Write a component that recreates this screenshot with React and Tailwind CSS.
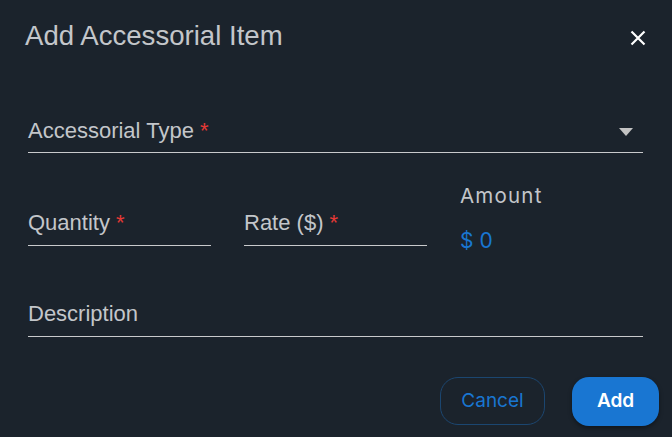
export default function App() {
  const label = "text-[22px] leading-[26px] text-[#c3c6ca]"
  const field = "pb-[8px] border-b border-[#c9cacc]"

  return (
    <div className="w-[672px] h-[437px] bg-[#1b232c] overflow-hidden" style={{ fontFamily: '"Liberation Sans", Arial, sans-serif' }}>
      {/* header */}
      <div className="flex items-start justify-between pt-[20px] pl-[25px] pr-[25px]">
        <h2 className="text-[27.6px] leading-[32px] text-[#c3c6ca]">Add Accessorial Item</h2>
        <button className="mt-[10px] mr-[1px] text-white">
          <svg width="16" height="16" viewBox="0 0 16 16" fill="none" stroke="currentColor" strokeWidth="2.2">
            <path d="M1.5 1.5 L14.5 14.5 M14.5 1.5 L1.5 14.5" />
          </svg>
        </button>
      </div>

      <div className="px-[28px] pr-[29px]">
        {/* accessorial type */}
        <div className={`mt-[66px] flex items-center justify-between ${field}`}>
          <span className={label}>
            Accessorial Type <span className="text-[#e53935]">*</span>
          </span>
          <svg width="14" height="8" viewBox="0 0 14 8" className="mr-[10px] mt-[2px]">
            <path d="M0 0 L14 0 L7 8 Z" fill="#c3c3c3" />
          </svg>
        </div>

        {/* qty / rate / amount */}
        <div className="mt-[31px] grid grid-cols-3 gap-[33px] items-start">
          <div className={`mt-[26px] ${field}`}>
            <span className={label}>
              Quantity <span className="text-[#e53935]">*</span>
            </span>
          </div>
          <div className={`mt-[26px] ${field}`}>
            <span className={label}>
              Rate ($) <span className="text-[#e53935]">*</span>
            </span>
          </div>
          <div className="flex flex-col gap-[20px]" style={{ fontFamily: 'Inter, sans-serif' }}>
            <span className="text-[20.5px] leading-[24px] tracking-[1.2px] text-[#c3c6ca]">Amount</span>
            <span className="text-[21px] leading-[26px] text-[#1976d2]">$ 0</span>
          </div>
        </div>

        {/* description */}
        <div className={`mt-[47px] ${field}`}>
          <span className={label}>Description</span>
        </div>
      </div>

      {/* actions */}
      <div className="mt-[40px] flex justify-end gap-[27px] pr-[13px]" style={{ fontFamily: 'Inter, sans-serif' }}>
        <button className="w-[105px] h-[48px] rounded-[18px] border border-[#1b4670] text-[19px] text-[#1976d2]">
          Cancel
        </button>
        <button className="w-[87px] h-[49px] rounded-[17px] bg-[#1976d2] text-[19px] font-semibold text-white shadow-[0_2px_4px_rgba(0,0,0,0.4)]">
          Add
        </button>
      </div>
    </div>
  )
}
